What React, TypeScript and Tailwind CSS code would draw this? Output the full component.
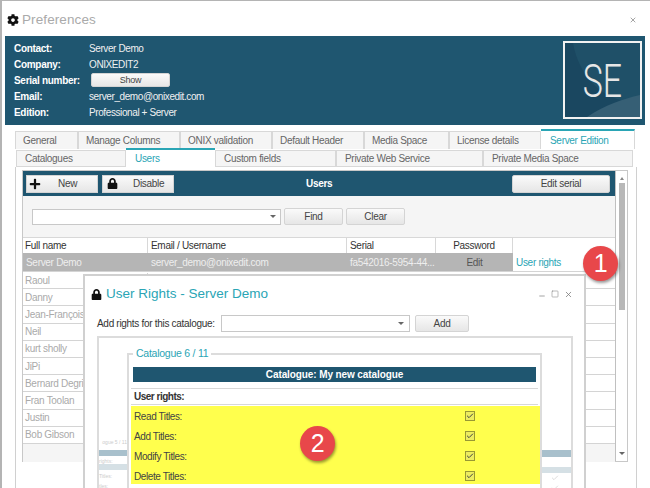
import { Check, X, Minus, Square } from 'lucide-react'
import { FaCog, FaLock, FaPlus } from 'react-icons/fa'

const mainTabs = [
  { label: 'General', w: 'w-[63px]' },
  { label: 'Manage Columns', w: 'w-[102px]' },
  { label: 'ONIX validation', w: 'w-[92px]' },
  { label: 'Default Header', w: 'w-[92px]' },
  { label: 'Media Space', w: 'w-[85px]' },
  { label: 'License details', w: 'w-[92px]' },
]

const subTabs = [
  { label: 'Catalogues', w: 'w-[110px]', active: false },
  { label: 'Users', w: 'w-[89px]', active: true },
  { label: 'Custom fields', w: 'w-[121px]', active: false },
  { label: 'Private Web Service', w: 'w-[147px]', active: false },
  { label: 'Private Media Space', w: 'w-[150px]', active: false },
]

const users = ['Raoul', 'Danny', 'Jean-François', 'Neil', 'kurt sholly', 'JiPi', 'Bernard Degri', 'Fran Toolan', 'Justin', 'Bob Gibson']
const rights = ['Read Titles:', 'Add Titles:', 'Modify Titles:', 'Delete Titles:']

const info = [
  { label: 'Contact:', value: 'Server Demo' },
  { label: 'Company:', value: 'ONIXEDIT2' },
  { label: 'Serial number:', value: null },
  { label: 'Email:', value: 'server_demo@onixedit.com' },
  { label: 'Edition:', value: 'Professional + Server' },
]

function Caret() {
  return <span className="h-0 w-0 border-x-[3px] border-t-[3px] border-x-transparent border-t-[#666]" />
}

function GrayButton({ label, className }: { label: string; className: string }) {
  return (
    <div className={`flex h-[17px] items-center justify-center rounded-[2px] border border-[#d4d4d4] bg-gradient-to-b from-[#fafafa] to-[#e6e6e6] text-[#444] ${className}`}>
      {label}
    </div>
  )
}

function LogoBox() {
  return (
    <div className="relative flex h-[78px] w-[79px] items-center justify-center overflow-hidden border-2 border-[#f2f2f2] bg-[#1f5068]">
      <svg className="absolute inset-0" width="75" height="74" viewBox="0 0 75 74">
        <path d="M8 0 C14 34 40 62 75 58 V74 H0 V0 Z" fill="#1a4760" />
        <path d="M22 74 C40 62 58 56 75 52 V74 Z" fill="#365f75" />
      </svg>
      <span className="relative scale-x-[0.72] text-[47px] leading-none font-light tracking-normal text-[#e6e6e6] [font-family:Roboto,sans-serif]">SE</span>
    </div>
  )
}

function Modal() {
  return (
    <div className="absolute top-[274px] left-[83px] h-[230px] w-[503px] border-2 border-[#d0d0d0] bg-white">
      <div className="flex h-[36px] items-center pr-[11px] pl-[6px]">
        <FaLock size={11} className="text-[#111]" />
        <span className="ml-[4px] text-[13.5px] tracking-normal text-[#2aa5b5]">User Rights - Server Demo</span>
        <div className="ml-auto flex items-center gap-[5px] text-[#777]">
          <Minus size={8} strokeWidth={2} className="mt-[3px]" />
          <Square size={8} strokeWidth={1.5} />
          <X size={9} strokeWidth={2} />
        </div>
      </div>
      <div className="mt-[3px] flex h-[17px] items-center pl-[12px] text-[#333]">
        <span className="w-[124px] whitespace-nowrap">Add rights for this catalogue:</span>
        <div className="flex h-[17px] w-[189px] items-center justify-end border border-[#c8c8c8] pr-[5px]">
          <Caret />
        </div>
        <GrayButton label="Add" className="ml-[5px] w-[54px]" />
      </div>
      <div className="mt-[4px] ml-[12px] flex h-[160px] w-[476px] border-2 border-b-0 border-[#dcdcdc]">
        <div className="w-[28px] pt-[100px] text-[5px] leading-[8px] tracking-normal text-[#ccc]">
          <div className="h-[12px] text-right">ogue 5 / 11</div>
          <div className="h-[6px] bg-[#a8c0cc]" />
          <div className="h-[8px] pt-[1px]">rights:</div>
          <div className="h-[6px] bg-[#d5e0e5]" />
          <div className="pt-[2px]">Titles:</div>
          <div className="pt-[2px]">tles:</div>
        </div>
        <div className="relative mt-[15px] w-[415px] border-t-2 border-r-2 border-l-2 border-[#dcdcdc] pt-[12px]">
          <span className="absolute -top-[9px] left-[4px] bg-white px-[3px] text-[10.5px] leading-[14px] tracking-[-0.25px] text-[#2aa5b5]">Catalogue 6 / 11</span>
          <div className="mx-[4px] flex h-[15px] items-center justify-center bg-[#1f5670] font-bold tracking-[-0.1px] text-white">Catalogue: My new catalogue</div>
          <div className="mx-[2px] mt-[6px] flex h-[17px] items-center border-y border-[#d8d8d8] pl-[3px] font-bold tracking-[-0.5px] text-[#333]">User rights:</div>
          <div className="mt-[3px] ml-[2px] h-[78px] bg-[#ffff4d] pl-[3px]">
            <div className="-mt-[2px]">
              {rights.map((r) => (
                <div key={r} className="flex h-[20px] items-center tracking-[-0.4px] text-[#444]">
                  <span className="w-[331px]">{r}</span>
                  <span className="flex h-[10px] w-[10px] items-center justify-center border border-[#999933] bg-[#ecec60]">
                    <Check size={8} strokeWidth={3} className="text-[#444]" />
                  </span>
                </div>
              ))}
            </div>
          </div>
        </div>
        <div className="w-[29px] pt-[112px]">
          <div className="h-[7px] bg-[#a8c0cc]" />
          <div className="mt-[10px] h-[6px] bg-[#d5e0e5]" />
          <div className="mt-[1px] ml-[9px] flex flex-col gap-[2px]">
            <Check size={8} className="text-[#ccc]" />
            <Check size={8} className="text-[#ccc]" />
          </div>
        </div>
      </div>
    </div>
  )
}

export default function App() {
  return (
    <div className="relative h-[488px] w-[650px] overflow-hidden bg-white text-[10px] tracking-[-0.3px] [font-family:'Liberation_Sans',Arial,sans-serif]">
      <div className="h-full border-t border-l-2 border-[#b4b4b4]">
        <div className="flex h-[35px] items-center pt-[3px] pr-[13px] pl-[5px]">
          <FaCog size={12} className="text-[#111]" />
          <span className="ml-[3px] text-[13.5px] tracking-[0.1px] text-[#aaa]">Preferences</span>
          <X size={8} strokeWidth={2} className="ml-auto text-[#777]" />
        </div>

        <div className="ml-[3px] flex h-[89px] w-[640px] justify-between bg-[#1f5670] pt-[5px] pr-[3px] pl-[9px] text-white">
          <div>
            {info.map((row) => (
              <div key={row.label} className="flex h-[15.8px] items-center">
                <span className="w-[75px] font-bold whitespace-nowrap">{row.label}</span>
                {row.value ? (
                  <span className="tracking-[-0.4px] text-[#f0f0f0]">{row.value}</span>
                ) : (
                  <GrayButton label="Show" className="ml-[2px] h-[14px]! w-[79px] text-[9px]" />
                )}
              </div>
            ))}
          </div>
          <LogoBox />
        </div>

        <div className="mt-[5px] ml-[13px] flex h-[19px] items-end">
          {mainTabs.map((t) => (
            <div key={t.label} className={`flex h-[18px] items-center border border-b-0 border-[#d8d8d8] bg-[#f5f5f5] pl-[7px] text-[#666] ${t.w}`}>
              {t.label}
            </div>
          ))}
          <div className="flex h-[20px] w-[94px] items-center border-t-2 border-r border-[#2aa5b5] border-r-[#d8d8d8] bg-white pl-[9px] text-[#2aa5b5]">
            Server Edition
          </div>
        </div>

        <div className="mt-[1px] ml-[14px] flex h-[17px]">
          {subTabs.map((t) => (
            <div
              key={t.label}
              className={
                t.active
                  ? `-mt-[2px] flex h-[19px] items-center border-t-2 border-[#2aa5b5] bg-white pl-[9px] text-[#2aa5b5] ${t.w}`
                  : `flex items-center border border-[#d8d8d8] bg-[#f5f5f5] pl-[8px] text-[#666] ${t.w}`
              }
            >
              {t.label}
            </div>
          ))}
        </div>

        <div className="ml-[13px] h-[321px] w-[622px] border-x border-[#d0d0d0] pt-[3px] pl-[6px]">
          <div className="flex h-[292px] w-[606px] border border-[#c8c8c8]">
            <div className="w-[593px] border-r border-[#c0c0c0]">
              <div className="flex h-[25px] items-center bg-[#1f5670] pr-[5px] pl-[3px]">
                <div className="flex h-[18px] w-[72px] items-center border border-[#d4d4d4] bg-gradient-to-b from-[#fafafa] to-[#e6e6e6] pl-[2px] text-[#444]">
                  <FaPlus size={12} className="text-[#111]" />
                  <span className="ml-[17px]">New</span>
                </div>
                <div className="ml-[4px] flex h-[18px] w-[72px] items-center border border-[#d4d4d4] bg-gradient-to-b from-[#fafafa] to-[#e6e6e6] pl-[4px] text-[#444]">
                  <FaLock size={11} className="text-[#111]" />
                  <span className="ml-[15px]">Disable</span>
                </div>
                <span className="ml-[132px] w-[52px] font-bold text-white">Users</span>
                <GrayButton label="Edit serial" className="ml-auto h-[18px]! w-[98px]" />
              </div>
              <div className="flex h-[41px] items-center bg-[#f5f5f5] pl-[9px]">
                <div className="flex h-[16px] w-[249px] items-center justify-end border border-[#c8c8c8] bg-white pr-[4px]">
                  <Caret />
                </div>
                <GrayButton label="Find" className="ml-[3px] w-[59px]" />
                <GrayButton label="Clear" className="ml-[3px] w-[59px]" />
              </div>
              <div className="flex h-[16px] items-center border-t border-[#d8d8d8] text-[#333]">
                <span className="w-[125px] border-r border-[#d8d8d8] pl-[2px]">Full name</span>
                <span className="w-[199px] border-r border-[#d8d8d8] pl-[3px]">Email / Username</span>
                <span className="w-[89px] border-r border-[#d8d8d8] pl-[3px]">Serial</span>
                <span className="w-[77px] border-r border-[#d8d8d8] text-center">Password</span>
              </div>
              <div className="flex h-[18px] items-center">
                <span className="flex h-full w-[125px] items-center bg-[#b5b5b5] pl-[3px] text-[#eee]">Server Demo</span>
                <span className="flex h-full w-[199px] items-center bg-[#b5b5b5] pl-[3px] text-[#eee]">server_demo@onixedit.com</span>
                <span className="flex h-full w-[89px] items-center bg-[#b5b5b5] pl-[3px] whitespace-nowrap text-[#eee]">fa542016-5954-44...</span>
                <span className="flex h-full w-[77px] items-center justify-center bg-[#b5b5b5] text-[#555]">Edit</span>
                <span className="pl-[3px] text-[#2aa5b5]">User rights</span>
              </div>
              {users.map((u) => (
                <div key={u} className="flex h-[17.2px] items-center overflow-hidden border-t border-[#d4d4d4] text-[#aaa]">
                  <span className="w-[125px] border-r border-[#d4d4d4] pl-[2px] whitespace-nowrap">{u}</span>
                </div>
              ))}
              <div className="h-[19px] border-t border-[#d4d4d4] bg-[#f5f5f5]" />
            </div>
            <div className="flex w-[11px] flex-col items-center justify-between py-[6px]">
              <span className="h-0 w-0 border-x-[2px] border-b-[3px] border-x-transparent border-b-[#888]" />
              <div className="mt-[3px] mb-auto h-[127px] w-[6px] bg-[#b8b8b8]" />
              <Caret />
            </div>
          </div>
        </div>
      </div>

      <Modal />

      <div className="absolute top-[246px] left-[583px] flex h-[35px] w-[35px] items-center justify-center rounded-full bg-[#e8474a] text-[25px] text-white shadow-[1px_2px_3px_rgba(0,0,0,0.4)]">1</div>
      <div className="absolute top-[426px] left-[300px] flex h-[35px] w-[35px] items-center justify-center rounded-full bg-[#e8474a] text-[25px] text-white shadow-[1px_2px_3px_rgba(0,0,0,0.4)]">2</div>
    </div>
  )
}
